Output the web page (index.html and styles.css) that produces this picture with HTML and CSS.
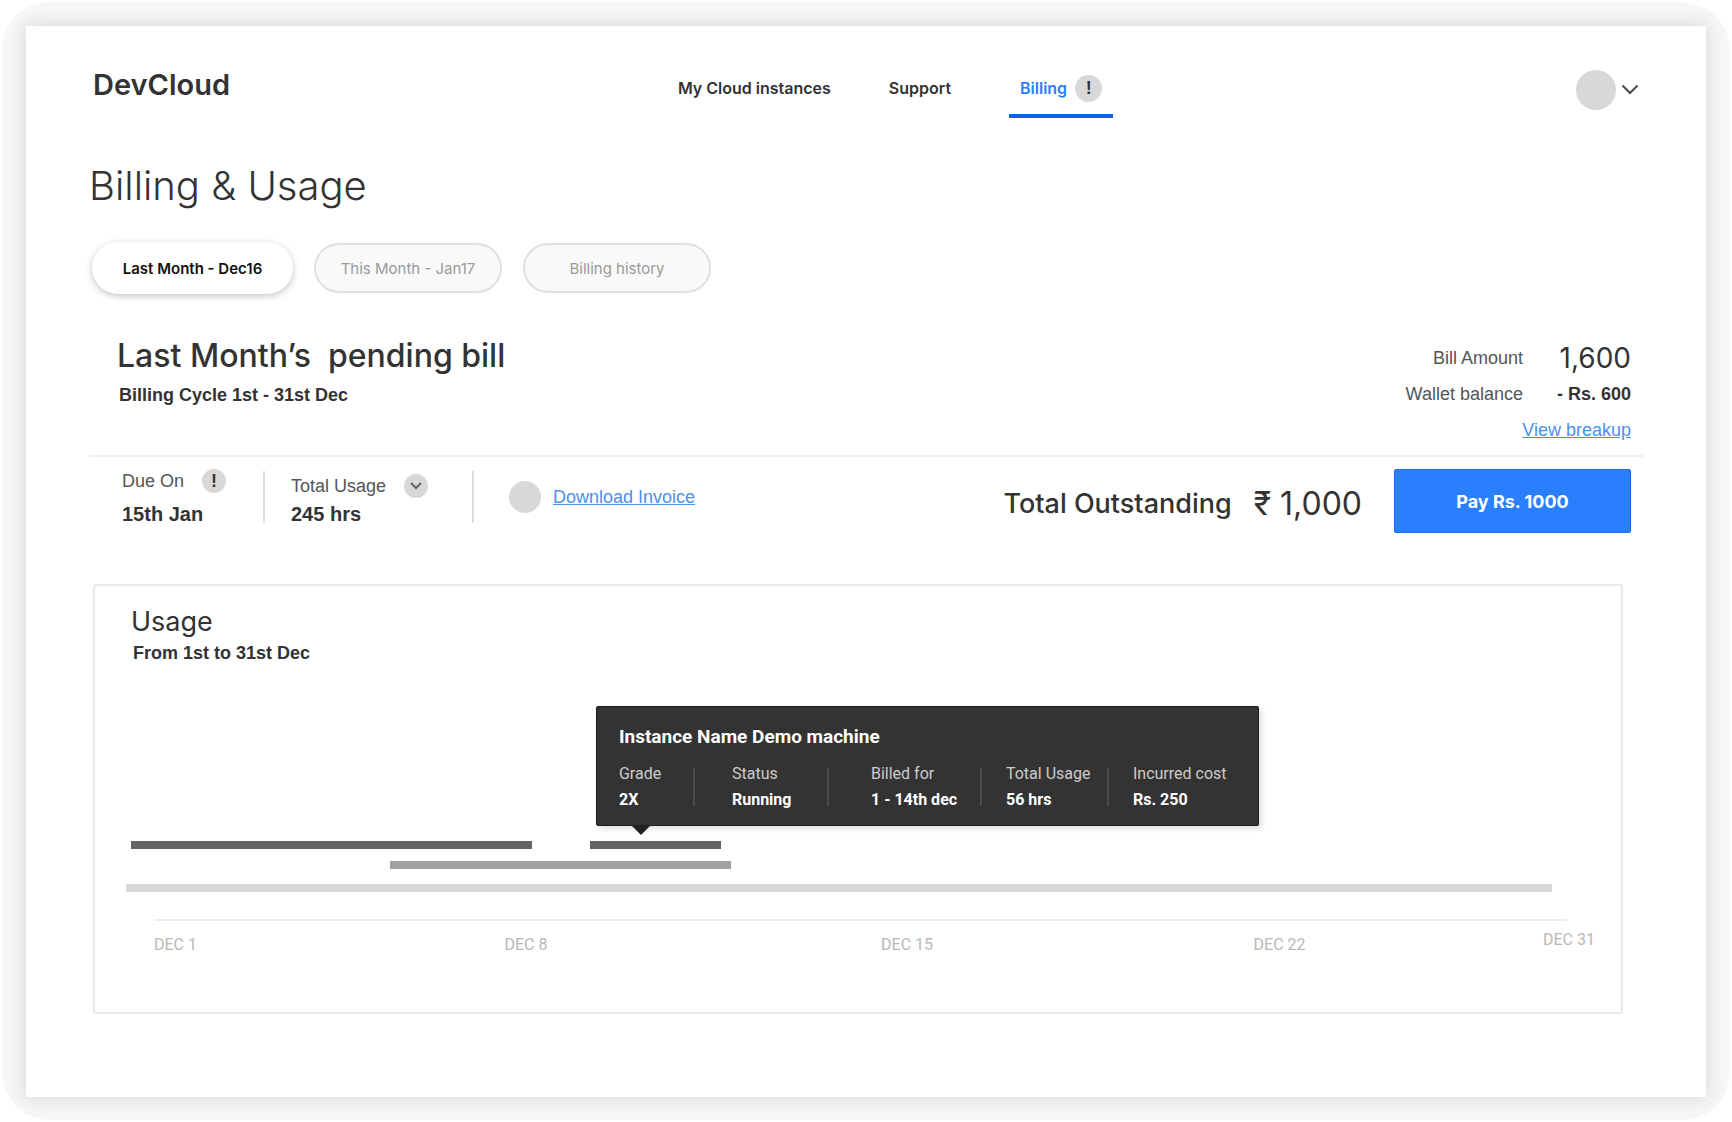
FILE: index.html
```
<!DOCTYPE html>
<html lang="en">
<head>
  <meta charset="UTF-8">
  <meta name="viewport" content="width=device-width, initial-scale=1.0">
  <title>DevCloud - Billing &amp; Usage</title>
  <link rel="stylesheet" href="styles.css">
</head>
<body>
  <div class="frame">
  <div class="sheet">

    <header class="header">
      <a class="brand" href="#">DevCloud</a>
      <nav class="nav">
        <a href="#">My Cloud instances</a>
        <a href="#">Support</a>
        <a class="active" href="#">Billing <span class="badge">!</span></a>
      </nav>
      <button class="user" type="button" aria-label="Account menu">
        <span class="avatar"></span>
        <svg width="18" height="12" viewBox="0 0 18 12" fill="none" stroke="#4a4a4a" stroke-width="2"><path d="M1.5 1.5 9 9l7.500-7.500"/></svg>
      </button>
    </header>

    <main>
      <h1>Billing &amp; Usage</h1>

      <div class="tabs">
        <button class="tab current" type="button">Last Month - Dec16</button>
        <button class="tab" type="button">This Month - Jan17</button>
        <button class="tab" type="button">Billing history</button>
      </div>

      <section class="bill">
        <div class="bill-top">
          <div class="bill-title">
            <h2>Last Month’s&nbsp; pending bill</h2>
            <p class="strong">Billing Cycle 1st - 31st Dec</p>
          </div>
          <div class="amounts">
            <div class="amount"><span>Bill Amount</span><span class="big">1,600</span></div>
            <div class="amount"><span>Wallet balance</span><span class="strong">- Rs. 600</span></div>
            <div class="amount"><a class="link" href="#">View breakup</a></div>
          </div>
        </div>

        <div class="bill-bottom">
          <div class="stats">
            <div class="stat due">
              <div class="stat-label">Due On <span class="badge">!</span></div>
              <div class="stat-value">15th Jan</div>
            </div>
            <div class="stat usage">
              <div class="stat-label">Total Usage
                <button class="badge" type="button" aria-label="Show usage">
                  <svg width="14" height="10" viewBox="0 0 14 10" fill="none" stroke="#666" stroke-width="2"><path d="M2 2l5 5 5-5"/></svg>
                </button>
              </div>
              <div class="stat-value">245 hrs</div>
            </div>
            <div class="invoice">
              <span class="dot"></span>
              <a class="link" href="#">Download Invoice</a>
            </div>
          </div>
          <div class="total">
            <span class="total-label">Total Outstanding</span>
            <span class="total-value">₹ 1,000</span>
            <button class="pay" type="button">Pay Rs. 1000</button>
          </div>
        </div>
      </section>

      <section class="card">
        <h3>Usage</h3>
        <p class="strong">From 1st to 31st Dec</p>

        <div class="timeline">
          <div class="lane">
            <div class="bar dark" style="margin-left: 0.34%; width: 27.35%"></div>
            <div class="bar dark" style="margin-left: 3.96%; width: 8.94%">
              <div class="tooltip">
                <h4>Instance Name Demo machine</h4>
                <dl>
                  <div><dt>Grade</dt><dd>2X</dd></div>
                  <div><dt>Status</dt><dd>Running</dd></div>
                  <div><dt>Billed for</dt><dd>1 - 14th dec</dd></div>
                  <div><dt>Total Usage</dt><dd>56 hrs</dd></div>
                  <div><dt>Incurred cost</dt><dd>Rs. 250</dd></div>
                </dl>
              </div>
            </div>
          </div>
          <div class="lane">
            <div class="bar mid" style="margin-left: 18.01%; width: 23.26%"></div>
          </div>
          <div class="lane">
            <div class="bar light" style="width: 97.27%"></div>
          </div>
          <div class="axis">
            <span>DEC 1</span>
            <span>DEC 8</span>
            <span>DEC 15</span>
            <span>DEC 22</span>
            <span class="last">DEC 31</span>
          </div>
        </div>
      </section>
    </main>

  </div>
  </div>
</body>
</html>
```
FILE: styles.css
```
* {
  box-sizing: border-box;
}

body {
  margin: 2px;
  background-color: white;
  color: #333;
  font-family: "Liberation Sans", Arial, sans-serif;
  font-size: 18px;
}

h1, h2, h3, h4, p, dl, dd {
  margin: 0;
}

button {
  border: 0;
  padding: 0;
  background: none;
  font: inherit;
  cursor: pointer;
}

.frame {
  padding: 24px 24px 23px;
  border-radius: 48px;
  background-color: #f7f7f7;
}

.sheet {
  min-height: calc(100vh - 51px);
  padding: 36px 63px 80px;
  background-color: white;
  box-shadow: 0 0 18px 2px rgba(0, 0, 0, 0.12);
}

/* Header */
.header {
  display: flex;
  justify-content: space-between;
  align-items: center;
  height: 56px;
  padding: 0 4px;
}

.brand {
  align-self: flex-start;
  color: #333;
  font-family: Inter, sans-serif;
  font-size: 29px;
  font-weight: 600;
  line-height: 46px;
  text-decoration: none;
}

.nav {
  display: flex;
  gap: 58px;
  margin-right: 15px;
}

.nav a {
  display: flex;
  align-items: center;
  gap: 8px;
  height: 56px;
  border-bottom: 4px solid transparent;
  color: #333;
  font-family: Inter, sans-serif;
  font-size: 16px;
  font-weight: 600;
  text-decoration: none;
}

.nav .active {
  padding: 0 11px;
  border-color: #0f62e6;
  color: #2a7fff;
}

.badge {
  display: inline-flex;
  justify-content: center;
  align-items: center;
  width: 24px;
  height: 24px;
  border-radius: 50%;
  background-color: #d8d8d8;
  color: #333;
  font-family: "Liberation Sans", Arial, sans-serif;
  font-size: 18px;
  font-weight: 700;
}

.nav .badge {
  width: 27px;
  height: 27px;
}

.user {
  display: flex;
  align-items: center;
  gap: 5px;
}

.avatar {
  width: 40px;
  height: 40px;
  border-radius: 50%;
  background-color: #d8d8d8;
}

h1 {
  margin-top: 43px;
  font-family: Inter, sans-serif;
  font-size: 40px;
  font-weight: 300;
  line-height: 50px;
}

/* Tabs */
.tabs {
  display: flex;
  align-items: center;
  gap: 21px;
  margin-top: 31px;
  padding-left: 3px;
}

.tab {
  width: 188px;
  height: 50px;
  border: 2px solid #e0e0e0;
  border-radius: 25px;
  background-color: #f9f9f9;
  color: #999;
  font-family: Inter, sans-serif;
  font-size: 15px;
}

.tab.current {
  width: 201px;
  height: 52px;
  border: 0;
  border-radius: 26px;
  background-color: white;
  box-shadow: 0 2px 7px rgba(0, 0, 0, 0.24);
  color: #111;
  font-weight: 600;
}

/* Bill */
.bill {
  margin-top: 42px;
}

.bill-top {
  display: flex;
  justify-content: space-between;
  padding: 0 12px 7px 28px;
  border-bottom: 2px solid #ebeeee;
}

h2 {
  font-family: Inter, sans-serif;
  font-size: 32px;
  font-weight: 500;
  line-height: 40px;
}

.strong {
  font-weight: 700;
}

.bill-title p {
  margin-top: 4px;
  padding-left: 2px;
  line-height: 30px;
}

.amounts {
  padding-top: 4px;
}

.amount {
  display: flex;
  justify-content: flex-end;
  align-items: center;
  line-height: 36px;
  color: #555;
}

.amount span + span {
  min-width: 108px;
  text-align: right;
  color: #333;
}

.big {
  font-family: Inter, sans-serif;
  font-size: 28px;
}

.link {
  color: #4a90ee;
}

.bill-bottom {
  display: flex;
  justify-content: space-between;
  padding: 12px 12px 0 33px;
}

.stats {
  display: flex;
  height: 60px;
}

.stat {
  display: flex;
  flex-direction: column;
  justify-content: space-between;
  position: relative;
}

.stat-label {
  display: flex;
  align-items: center;
  color: #555;
  line-height: 24px;
}

.stat-value {
  font-size: 20px;
  font-weight: 700;
  line-height: 30px;
}

.due {
  width: 143px;
}

.due .stat-label {
  gap: 18px;
}

.usage {
  width: 209px;
  padding: 5px 0 0 26px;
}

.usage .stat-label {
  gap: 18px;
}

/* Thin separator at the right of each figure */
.stat::after {
  content: "";
  position: absolute;
  top: 2px;
  right: 0;
  width: 2px;
  height: 52px;
  background-color: #dedede;
}

.invoice {
  display: flex;
  align-items: center;
  gap: 12px;
  height: 56px;
  padding-left: 35px;
}

.dot {
  width: 32px;
  height: 32px;
  border-radius: 50%;
  background-color: #d8d8d8;
}

.total {
  display: flex;
  align-items: center;
}

.total span {
  padding-top: 4px;
  font-family: Inter, sans-serif;
}

.total-label {
  font-size: 27px;
  font-weight: 500;
}

.total-value {
  margin: 0 32px 0 22px;
  font-size: 32px;
}

.pay {
  width: 237px;
  height: 64px;
  border: 1px solid #1a6cf0;
  border-radius: 2px;
  background-color: #2a7fff;
  color: white;
  font-family: Inter, sans-serif;
  font-size: 18px;
  font-weight: 700;
}

/* Usage chart */
.card {
  margin: 51px 20px 0 4px;
  padding: 20px 29px 57px 31px;
  border: 2px solid #eaeaea;
  border-radius: 2px;
}

.card h3 {
  padding-left: 5px;
  font-family: Inter, sans-serif;
  font-size: 27px;
  font-weight: 400;
  line-height: 32px;
}

.card > p {
  padding-left: 7px;
  line-height: 30px;
}

.timeline {
  padding-top: 173px;
}

.lane {
  display: flex;
  margin-bottom: 12px;
}

.lane + .lane {
  margin-bottom: 15px;
}

.bar {
  position: relative;
  height: 8px;
}

.dark {
  background-color: #636363;
}

.mid {
  background-color: #a0a0a0;
}

.light {
  background-color: #d8d8d8;
}

.axis {
  display: grid;
  grid-template-columns: 350fr 376fr 372fr 289fr 49px;
  align-items: end;
  position: relative;
  height: 36px;
  margin: 27px 0 0 28px;
  color: #b8b8b8;
  font-family: Roboto, sans-serif;
  font-size: 16px;
  line-height: 20px;
  white-space: nowrap;
}

.axis::before {
  content: "";
  position: absolute;
  top: 0;
  left: 0;
  right: 25px;
  height: 2px;
  background-color: #e8eded;
}

/* The month end sits a little closer to the line */
.axis .last {
  padding-bottom: 5px;
}

/* Tooltip over the running instance */
.tooltip {
  position: absolute;
  left: 6px;
  bottom: 23px;
  width: 663px;
  height: 120px;
  padding: 18px 22px 0;
  border: 1px solid #1c1c1c;
  border-radius: 2px;
  background-color: #333;
  box-shadow: 3px 3px 5px rgba(0, 0, 0, 0.12);
  color: white;
  font-family: Roboto, sans-serif;
  font-size: 16px;
}

.tooltip::after {
  content: "";
  position: absolute;
  top: 100%;
  left: 34px;
  border: 10px solid transparent;
  border-top-color: #222;
  border-bottom: 0;
}

.tooltip h4 {
  font-size: 19px;
  font-weight: 700;
  line-height: 24px;
}

.tooltip dl {
  display: grid;
  grid-template-columns: 76px 134px 153px 127px auto;
  margin-top: 12px;
}

.tooltip dl > div {
  position: relative;
  line-height: 26px;
  white-space: nowrap;
}

.tooltip dl > div + div {
  padding-left: 24px;
}

.tooltip dl > div:nth-child(2) {
  padding-left: 37px;
}

.tooltip dl > div:nth-child(3) {
  padding-left: 42px;
}

.tooltip dl > div:not(:last-child)::after {
  content: "";
  position: absolute;
  top: 7px;
  right: 0;
  width: 2px;
  height: 38px;
  background-color: #4a4a4a;
}

.tooltip dt {
  color: #ccc;
}

.tooltip dd {
  font-weight: 700;
}
```
